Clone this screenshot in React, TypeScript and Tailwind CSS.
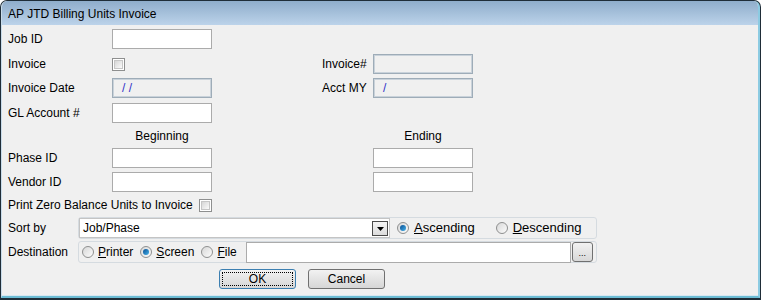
import React from "react";

const Checkbox = () => (
  <div className="w-[13px] h-[13px] border border-[#8e8f8f] bg-white p-[1px]">
    <div className="w-full h-full border border-[#c6c6c6] bg-gradient-to-br from-[#d6d6d6] to-[#fbfbfb]" />
  </div>
);

const Radio = ({ on = false }: { on?: boolean }) => (
  <div className="w-[12px] h-[12px] rounded-full border border-[#8e8f8f] bg-gradient-to-br from-[#d8d8d8] to-[#fcfcfc] flex items-center justify-center">
    {on && <div className="w-[6px] h-[6px] rounded-full bg-gradient-to-br from-[#0b4f93] to-[#45b2ea]" />}
  </div>
);

const Input = ({ w = "w-[100px]" }: { w?: string }) => (
  <div className={`${w} h-[20px] bg-white border border-[#ababab]`} />
);

const Disabled = ({ text }: { text: string }) => (
  <div className="w-[100px] h-[20px] bg-[#f0f0f0] border border-[#9eacb8] shadow-[inset_0_0_0_1px_#c9d2da] flex items-center pl-[9px] text-[#3030c8] whitespace-pre">
    {text}
  </div>
);

const U = ({ c }: { c: string }) => <span className="underline">{c}</span>;

export default function App() {
  return (
    <div className="w-[761px] h-[300px] bg-[#1f2d38] rounded-t-[7px] pt-[1px] px-[1px] pb-[2px] font-['Liberation_Sans',Arial,sans-serif] text-[12px] text-black">
      <div className="h-full flex flex-col rounded-t-[6px] overflow-hidden bg-[#f0f0f0] border-l border-[#c9dcea] border-r-2 border-r-[#8ccbe2] border-b-2 border-b-[#6cbcd4]">
        <div className="h-[24px] shrink-0 bg-gradient-to-b from-[#8fadcb] to-[#bcd3ea] flex items-center pl-[6px] pt-[1px]">
          AP JTD Billing Units Invoice
        </div>
        <div className="flex-1 pl-[6px] pt-[4px] border-b border-[#d7e8f2]">
          {/* Job ID */}
          <div className="flex items-center h-[20px]">
            <div className="w-[104px]">Job ID</div>
            <Input />
          </div>
          {/* Invoice */}
          <div className="flex items-center h-[20px] mt-[5px]">
            <div className="w-[104px]">Invoice</div>
            <div className="w-[100px]"><Checkbox /></div>
            <div className="w-[110px]" />
            <div className="w-[51px]">Invoice#</div>
            <Disabled text="" />
          </div>
          {/* Invoice Date */}
          <div className="flex items-center h-[20px] mt-[4px]">
            <div className="w-[104px]">Invoice Date</div>
            <Disabled text="/ /" />
            <div className="w-[110px]" />
            <div className="w-[51px]">Acct MY</div>
            <Disabled text="/" />
          </div>
          {/* GL */}
          <div className="flex items-center h-[20px] mt-[5px]">
            <div className="w-[104px]">GL Account #</div>
            <Input />
          </div>
          {/* Beginning / Ending */}
          <div className="flex items-center h-[23px] mt-[1px]">
            <div className="w-[104px]" />
            <div className="w-[100px] text-center">Beginning</div>
            <div className="w-[161px]" />
            <div className="w-[100px] text-center">Ending</div>
          </div>
          {/* Phase */}
          <div className="flex items-center h-[20px] mt-[1px]">
            <div className="w-[104px]">Phase ID</div>
            <Input />
            <div className="w-[161px]" />
            <Input />
          </div>
          {/* Vendor */}
          <div className="flex items-center h-[20px] mt-[4px]">
            <div className="w-[104px]">Vendor ID</div>
            <Input />
            <div className="w-[161px]" />
            <Input />
          </div>
          {/* Print zero */}
          <div className="flex items-center h-[18px] mt-[4px]">
            <div>Print Zero Balance Units to Invoice</div>
            <div className="ml-[6px]"><Checkbox /></div>
          </div>
          {/* Sort by */}
          <div className="flex items-center h-[22px] mt-[3px]">
            <div className="w-[70px]">Sort by</div>
            <div className="w-[519px] h-[22px] border border-[#d5dbe0] rounded-[3px] flex items-center">
              <div className="w-[311px] h-[20px] bg-white border border-[#c4c4c4] flex items-center pl-[3px] relative">
                <span>Job/Phase</span>
                <div className="absolute right-[1px] top-[2px] w-[16px] h-[15px] border border-[#4a4a4a] bg-gradient-to-b from-[#f4f4f4] to-[#dcdcdc] flex items-center justify-center">
                  <svg width="7" height="4" viewBox="0 0 7 4"><path d="M0 0h7L3.5 4z" fill="#000" /></svg>
                </div>
              </div>
              <div className="ml-[7px]"><Radio on /></div>
              <div className="ml-[5px] text-[13px]"><U c="A" />scending</div>
              <div className="ml-[21px]"><Radio /></div>
              <div className="ml-[5px] text-[13px]"><U c="D" />escending</div>
            </div>
          </div>
          {/* Destination */}
          <div className="flex items-center h-[22px] mt-[2px]">
            <div className="w-[70px]">Destination</div>
            <div className="w-[519px] h-[22px] border border-[#d5dbe0] rounded-[3px] flex items-center">
              <div className="ml-[3px]"><Radio /></div>
              <div className="ml-[4px]"><U c="P" />rinter</div>
              <div className="ml-[7px]"><Radio on /></div>
              <div className="ml-[4px]"><U c="S" />creen</div>
              <div className="ml-[7px]"><Radio /></div>
              <div className="ml-[4px]"><U c="F" />ile</div>
              <div className="ml-[9px] w-[325px] h-[21px] bg-white border border-[#ababab]" />
              <div className="ml-[1px] w-[21px] h-[20px] rounded-[3px] border border-[#707070] bg-gradient-to-b from-[#f2f2f2] to-[#d8d8d8] flex items-end justify-center pb-[3px] text-[9px] leading-none">...</div>
            </div>
          </div>
          {/* Buttons */}
          <div className="flex items-center h-[20px] mt-[6px]">
            <div className="ml-[211px] w-[77px] h-[20px] rounded-[3px] border border-[#3c7fb1] bg-gradient-to-b from-[#f2f2f2] to-[#d6d6d6] p-[2px]">
              <div className="w-full h-full border border-dotted border-black flex items-center justify-center">OK</div>
            </div>
            <div className="ml-[12px] w-[77px] h-[20px] rounded-[3px] border border-[#707070] bg-gradient-to-b from-[#f2f2f2] to-[#d6d6d6] flex items-center justify-center">Cancel</div>
          </div>
        </div>
      </div>
    </div>
  );
}
